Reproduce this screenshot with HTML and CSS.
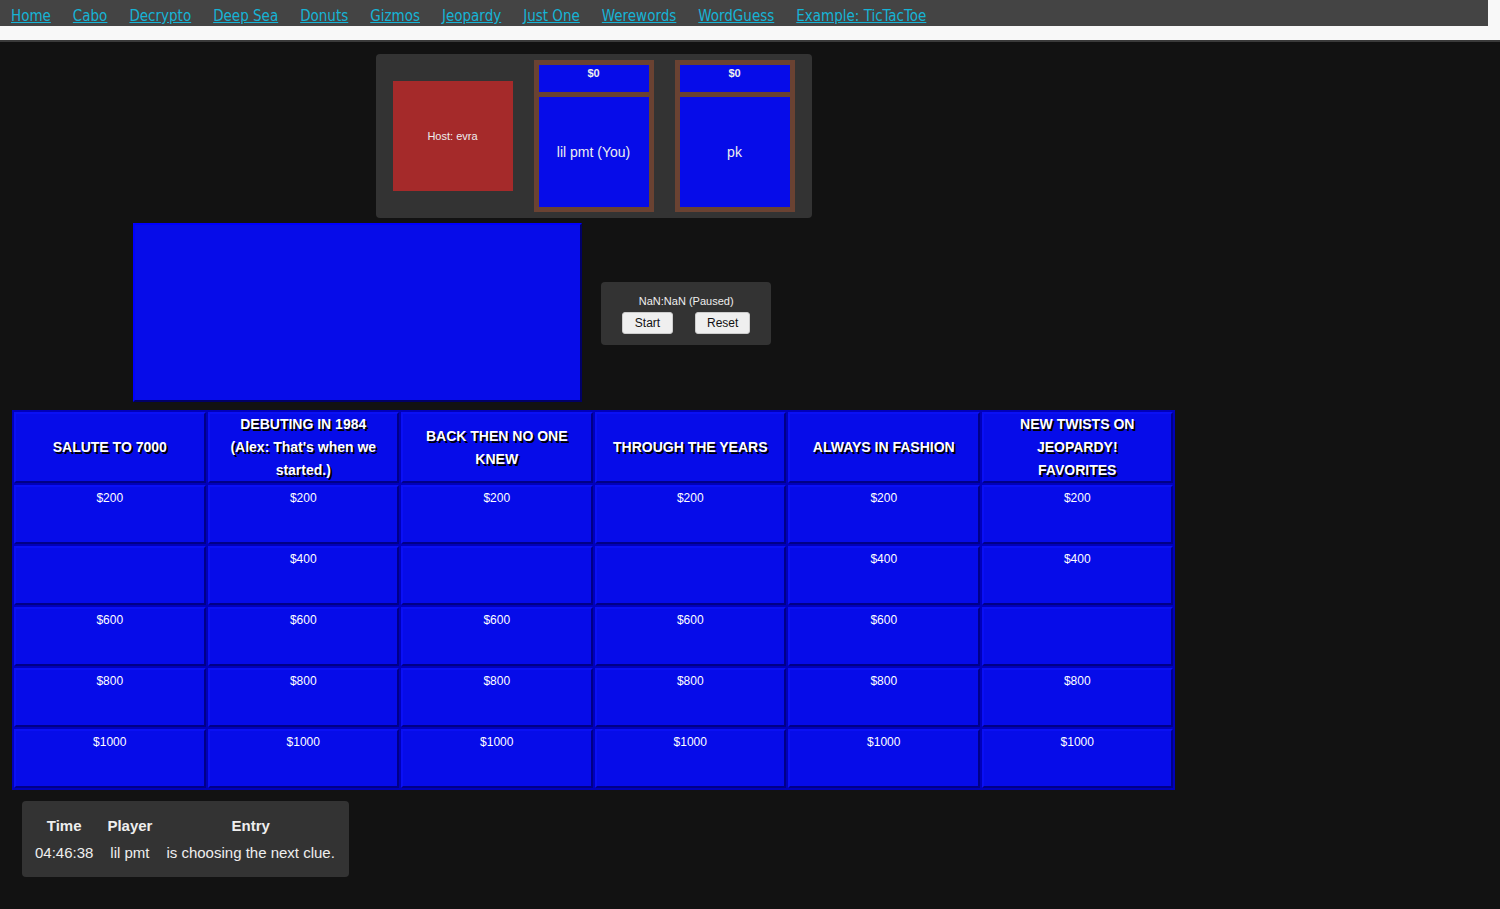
FILE: index.html
```html
<!DOCTYPE html>
<html lang="en">
<head>
    <meta charset="UTF-8">
    <meta name="viewport" content="width=device-width, initial-scale=1.0">
    <title>Jeopardy</title>
    <link rel="stylesheet" href="styles.css">
</head>
<body>
    <header class="site-header">
        <nav class="site-nav">
            <a href="#">Home</a>
            <a href="#">Cabo</a>
            <a href="#">Decrypto</a>
            <a href="#">Deep Sea</a>
            <a href="#">Donuts</a>
            <a href="#">Gizmos</a>
            <a href="#">Jeopardy</a>
            <a href="#">Just One</a>
            <a href="#">Werewords</a>
            <a href="#">WordGuess</a>
            <a href="#">Example: TicTacToe</a>
        </nav>
    </header>

    <main class="game">
        <section class="podiums">
            <div class="host">Host: evra</div>
            <div class="player">
                <div class="score">$0</div>
                <div class="name">lil pmt (You)</div>
            </div>
            <div class="player">
                <div class="score">$0</div>
                <div class="name">pk</div>
            </div>
        </section>

        <section class="stage">
            <div class="clue-screen"></div>
            <div class="timer">
                <div class="timer-text">NaN:NaN (Paused)</div>
                <div class="timer-buttons">
                    <button>Start</button>
                    <button>Reset</button>
                </div>
            </div>
        </section>

        <div class="board">
            <div class="category">SALUTE TO 7000</div>
            <div class="category">DEBUTING IN 1984 (Alex: That's when we started.)</div>
            <div class="category">BACK THEN NO ONE KNEW</div>
            <div class="category">THROUGH THE YEARS</div>
            <div class="category">ALWAYS IN FASHION</div>
            <div class="category">NEW TWISTS ON JEOPARDY! FAVORITES</div>

            <div class="clue">$200</div>
            <div class="clue">$200</div>
            <div class="clue">$200</div>
            <div class="clue">$200</div>
            <div class="clue">$200</div>
            <div class="clue">$200</div>

            <div class="clue"></div>
            <div class="clue">$400</div>
            <div class="clue"></div>
            <div class="clue"></div>
            <div class="clue">$400</div>
            <div class="clue">$400</div>

            <div class="clue">$600</div>
            <div class="clue">$600</div>
            <div class="clue">$600</div>
            <div class="clue">$600</div>
            <div class="clue">$600</div>
            <div class="clue"></div>

            <div class="clue">$800</div>
            <div class="clue">$800</div>
            <div class="clue">$800</div>
            <div class="clue">$800</div>
            <div class="clue">$800</div>
            <div class="clue">$800</div>

            <div class="clue">$1000</div>
            <div class="clue">$1000</div>
            <div class="clue">$1000</div>
            <div class="clue">$1000</div>
            <div class="clue">$1000</div>
            <div class="clue">$1000</div>
        </div>

        <div class="log">
            <table>
                <tr>
                    <th>Time</th>
                    <th>Player</th>
                    <th>Entry</th>
                </tr>
                <tr>
                    <td>04:46:38</td>
                    <td>lil pmt</td>
                    <td>is choosing the next clue.</td>
                </tr>
            </table>
        </div>
    </main>
</body>
</html>
```

FILE: styles.css
```css
body {
    margin: 0;
    background-color: #121212;
    font-family: "Liberation Sans", Arial, sans-serif;
    color: #eee;
}

/* top menu */
.site-header {
    height: 40px;
    background: #f8f8f8;
    border-bottom: 2px solid #3a3a3a;
}
.site-nav {
    display: flex;
    gap: 22px;
    box-sizing: border-box;
    height: 26px;
    margin-right: 12px;
    padding: 6px 0 0 11px;
    align-items: center;
    background: #444;
    font-family: "DejaVu Sans Condensed", "DejaVu Sans", sans-serif;
    font-size: 15px;
}
.site-nav a {
    color: #16b4d6;
}

.game {
    width: 1163px;
    margin-left: 12px;
}

/* podiums */
.podiums {
    display: flex;
    align-items: center;
    gap: 21px;
    width: max-content;
    margin: 12px auto 0;
    padding: 6px 17px;
    background: #333;
    border-radius: 4px;
}
.host {
    width: 120px;
    height: 110px;
    display: flex;
    align-items: center;
    justify-content: center;
    background: #a52a2a;
    font-size: 11px;
}
.player {
    width: 110px;
    border: 5px solid #6a4232;
    background: #6a4232;
}
.player .score {
    height: 25px;
    padding-top: 2px;
    margin-bottom: 5px;
    background: #060ce9;
    font-size: 11px;
    font-weight: bold;
    text-align: center;
}
.player .name {
    height: 110px;
    display: flex;
    align-items: center;
    justify-content: center;
    background: #060ce9;
    font-size: 14px;
}

/* clue screen + timer */
.stage {
    display: flex;
    align-items: center;
    gap: 19px;
    margin: 5px 0 8px 121px;
}
.clue-screen {
    width: 445px;
    height: 175px;
    background: #060ce9;
    border: 2px solid;
    border-color: #0000ff #000066 #000066 #0000ff;
}
.timer {
    margin-top: 2px;
    padding: 12px 21px 11px;
    background: #333;
    border-radius: 4px;
    text-align: center;
}
.timer-text {
    font-size: 11px;
    line-height: 14px;
    margin-bottom: 4px;
}
.timer-buttons {
    display: flex;
    gap: 22px;
}
.timer-buttons button {
    height: 22px;
    min-width: 51px;
    padding: 0 11px;
    background: #efefef;
    border: 1px solid #ccc;
    border-radius: 3px;
    font-family: "Liberation Sans", Arial, sans-serif;
    font-size: 12px;
    color: #111;
}

/* board */
.board {
    display: grid;
    grid-template-columns: repeat(6, 1fr);
    grid-template-rows: 71px repeat(5, 59px);
    gap: 2px;
    padding: 2px;
    background: #0000bb;
}
.category, .clue {
    background: #060ce9;
    border: 2px solid;
    border-color: #0a10f5 #000088 #000088 #0a10f5;
    text-align: center;
    color: #fff;
}
.category {
    display: flex;
    align-items: center;
    justify-content: center;
    padding: 0 15px;
    font-size: 14px;
    font-weight: bold;
    line-height: 23px;
    text-shadow: 2px 2px 0 #000;
}
.clue {
    padding-top: 4px;
    font-size: 12px;
    line-height: 14px;
}

/* log */
.log {
    display: inline-block;
    margin: 11px 0 0 10px;
    padding: 11px 7px 11px 6px;
    background: #333;
    border-radius: 4px;
}
.log table {
    border-collapse: collapse;
    font-size: 15px;
    line-height: 17px;
}
.log th, .log td {
    padding: 5px 7px;
    text-align: center;
}
```
